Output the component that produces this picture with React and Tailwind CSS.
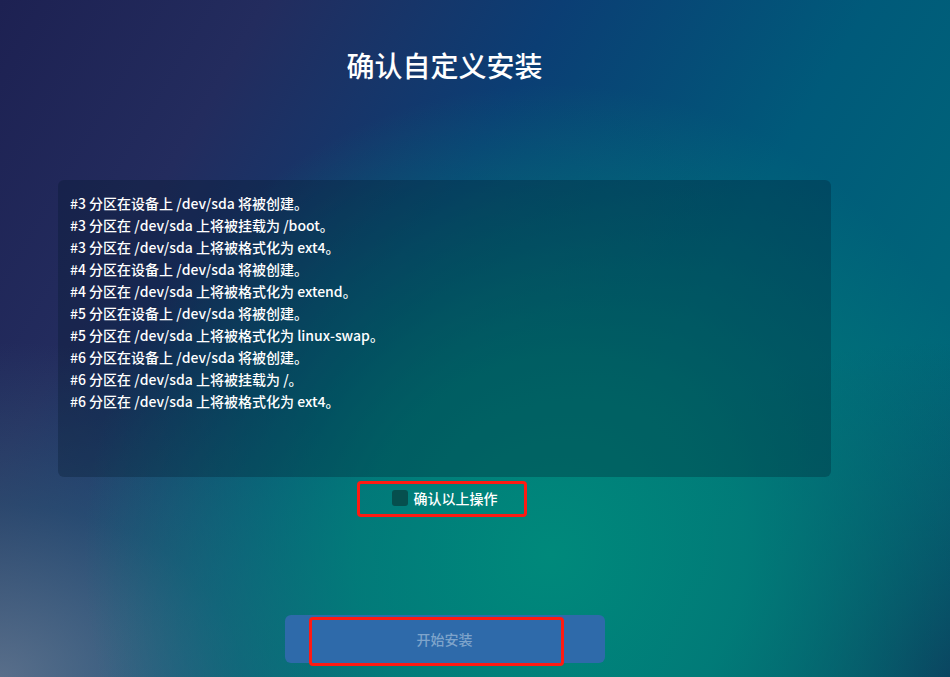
import React, { useState } from "react";

const logLines = [
  "#3 分区在设备上 /dev/sda 将被创建。",
  "#3 分区在 /dev/sda 上将被挂载为 /boot。",
  "#3 分区在 /dev/sda 上将被格式化为 ext4。",
  "#4 分区在设备上 /dev/sda 将被创建。",
  "#4 分区在 /dev/sda 上将被格式化为 extend。",
  "#5 分区在设备上 /dev/sda 将被创建。",
  "#5 分区在 /dev/sda 上将被格式化为 linux-swap。",
  "#6 分区在设备上 /dev/sda 将被创建。",
  "#6 分区在 /dev/sda 上将被挂载为 /。",
  "#6 分区在 /dev/sda 上将被格式化为 ext4。"
];

const App = () => {
  const [confirmed, setConfirmed] = useState(false);

  return (
    <div
      className="relative w-[950px] h-[677px] overflow-hidden text-white bg-[#0b4a72] bg-[radial-gradient(ellipse_at_58%_82%,#00897b_0%,rgba(0,130,122,0.85)_25%,rgba(0,110,120,0)_60%),radial-gradient(ellipse_at_0%_100%,rgba(110,130,150,0.75)_0%,rgba(60,110,130,0.4)_18%,rgba(0,0,0,0)_35%),radial-gradient(ellipse_at_100%_100%,#0c3a5c_0%,rgba(12,58,92,0)_35%),linear-gradient(120deg,#1d2152_0%,#232c5e_20%,#0b3e74_42%,#005a7a_65%,#006e78_100%)]"
      style={{ fontFamily: '"Noto Sans CJK SC", "Noto Sans", sans-serif' }}
    >
      <div className="flex flex-col items-center w-[889px]">
        <h1 className="mt-[45px] text-[28px] leading-[40px] font-medium">确认自定义安装</h1>

        <div className="mt-[95px] w-[773px] h-[297px] px-3 py-3 rounded-md bg-[rgba(0,20,40,0.28)]">
          {logLines.map((line, i) => (
            <p key={i} className="text-[14px] leading-[22px] font-medium">
              {line}
            </p>
          ))}
        </div>

        <div className="relative mt-[4px] mr-[6px] w-[170px] h-[36px] flex items-center justify-center">
          <label className="flex items-center gap-[6px] ml-[6px] -mt-[3px] cursor-pointer">
            <input
              type="checkbox"
              checked={confirmed}
              onChange={(e) => setConfirmed(e.target.checked)}
              className="appearance-none w-4 h-4 rounded-[3px] bg-[#064f4e]"
            />
            <span className="text-[14px] leading-5 font-medium">确认以上操作</span>
          </label>
          <div className="absolute inset-0 border-[3px] border-[#ff1a12] rounded-[4px] pointer-events-none" />
        </div>

        <div className="relative mt-[98px]">
          <button
            type="button"
            className="w-[320px] h-[48px] rounded-md bg-[#2e6aaa] text-[#7ea4cb] text-[14px] font-medium"
          >
            开始安装
          </button>
          <div className="absolute left-[24px] top-[2px] w-[255px] h-[49px] border-[3px] border-[#ff1a12] rounded-[4px] pointer-events-none" />
        </div>
      </div>
    </div>
  );
};

export default App;
